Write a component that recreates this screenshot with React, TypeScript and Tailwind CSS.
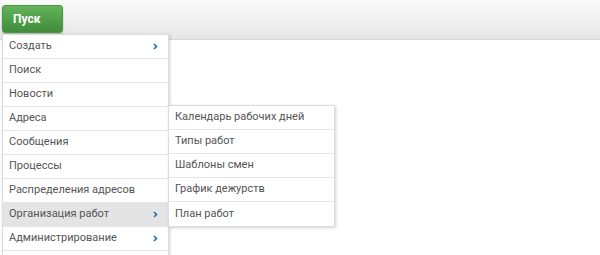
import React from 'react';

const mainItems = [
  { label: 'Создать', sub: true },
  { label: 'Поиск' },
  { label: 'Новости' },
  { label: 'Адреса' },
  { label: 'Сообщения' },
  { label: 'Процессы' },
  { label: 'Распределения адресов' },
  { label: 'Организация работ', sub: true, active: true },
  { label: 'Администрирование', sub: true },
  { label: '' },
];

const subItems = ['Календарь рабочих дней', 'Типы работ', 'Шаблоны смен', 'График дежурств', 'План работ'];

const Chevron = () => (
  <svg width="5" height="7" viewBox="0 0 5 7" className="text-[#1f6fae]">
    <path d="M1 1 L3.5 3.5 L1 6" stroke="currentColor" strokeWidth="1.6" fill="none" />
  </svg>
);

export default function App() {
  return (
    <div className="relative h-[255px] w-[600px] overflow-hidden bg-white font-['Roboto',sans-serif] text-[11px] text-[#555]">
      {/* top bar */}
      <div className="flex h-[40px] items-start border-b border-[#d9d9d9] bg-gradient-to-b from-[#fbfbfb] to-[#e6e6e6] pl-[2px] pt-[5px]">
        <button className="h-[28px] w-[61px] rounded-[3px] border border-[#4a9a44] bg-gradient-to-b from-[#63b35a] to-[#3f8d3b] pl-[10px] text-left text-[12px] font-bold text-white shadow-[0_1px_2px_rgba(0,0,0,0.25)]">
          Пуск
        </button>
      </div>

      {/* main menu */}
      <div className="absolute left-[2px] top-[34px] w-[167px] border border-[#dcdcdc] bg-white shadow-[1px_1px_3px_rgba(0,0,0,0.18)]">
        {mainItems.map((it, i) => (
          <div
            key={i}
            className={`flex h-[24px] items-center justify-between border-b border-[#e6e6e6] pl-[6px] pr-[10px] ${it.active ? 'bg-[#e4e4e4]' : ''}`}
          >
            <span>{it.label}</span>
            {it.sub && <Chevron />}
          </div>
        ))}
      </div>

      {/* submenu */}
      <div className="absolute left-[168px] top-[105px] w-[167px] border border-[#dcdcdc] bg-white shadow-[1px_1px_3px_rgba(0,0,0,0.18)]">
        {subItems.map((s, i) => (
          <div key={i} className="flex h-[24px] items-center border-b border-[#e6e6e6] pl-[6px] last:border-b-0">
            {s}
          </div>
        ))}
      </div>
    </div>
  );
}
